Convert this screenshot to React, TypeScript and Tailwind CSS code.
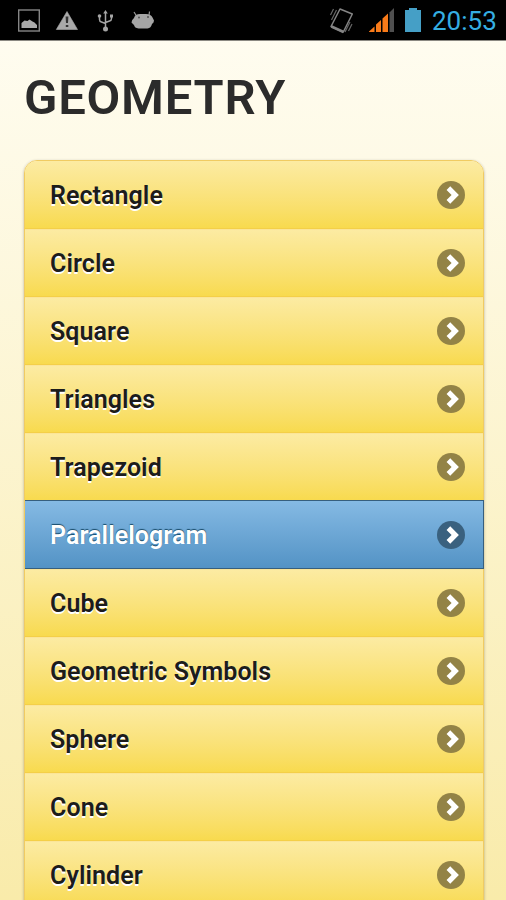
const items = [
  "Rectangle",
  "Circle",
  "Square",
  "Triangles",
  "Trapezoid",
  "Parallelogram",
  "Cube",
  "Geometric Symbols",
  "Sphere",
  "Cone",
  "Cylinder",
];

function StatusBar() {
  return (
    <div className="flex h-[41px] shrink-0 items-start justify-between border-b border-[#8b8982] bg-black">
      <svg width="170" height="40" viewBox="0 0 170 40">
        <rect x="18.7" y="10" width="20.6" height="21" fill="none" stroke="#858585" strokeWidth="1.4" />
        <path d="M21.500 28v-5l3-2.500 3 .5 2-1.500 3 2 2 1 2.500 2.500v3z" fill="#aaa" />
        <path d="M67 11.500L77.500 29.500H56.300z" fill="#a9a9a9" stroke="#a9a9a9" strokeWidth="0.6" strokeLinejoin="round" />
        <path d="M65.600 16.500h2.800l-.4 6.500h-2zM65.800 25h2.500v2h-2.500z" fill="#333" />
        <g fill="none" stroke="#a5a5a5" strokeWidth="1.500">
          <path d="M105.500 13v15M99.500 17v2.500q0 2 2 2.500l4 1.500M111.500 17v1.500q0 2-2 2.500l-4 1.500" />
        </g>
        <path d="M105.500 10l2.300 3.500h-4.600z" fill="#a5a5a5" />
        <circle cx="105.500" cy="29" r="2.500" fill="#a5a5a5" />
        <circle cx="99.500" cy="16" r="1.800" fill="#a5a5a5" />
        <rect x="110" y="14.500" width="3" height="3" fill="#a5a5a5" />
        <path d="M134 12l2.500 4M149.500 11.500l-.5 4" stroke="#999" strokeWidth="1.200" />
        <path d="M134 18q1-4 6-4h6q5 0 6.500 3.500l1.500 3q0 2-2 3.500-1 4-4.500 4.500h-9q-4-.5-4.500-3.500l-2.500-2.500q0-2.500 2.500-4.500z" fill="#a5a5a5" />
        <circle cx="139" cy="17.500" r="1" fill="#555" />
        <circle cx="148" cy="17" r="1" fill="#555" />
      </svg>
      <div className="flex items-start">
        <svg width="112" height="40" viewBox="320 0 112 40">
          <path d="M340 9l12.300 5-9 18-12.300-5.500z" fill="none" stroke="#858585" strokeWidth="1.500" strokeLinejoin="round" />
          <path d="M331.500 26.500l12 5.500" stroke="#858585" strokeWidth="2.600" />
          <path d="M330.500 15l3-6M331.500 20l5-10M345 32l5-10M348.500 31l3.500-7" stroke="#666" strokeWidth="1.200" />
          <path d="M369 32v-.5l5.500-5V32zM376 32v-7.500l5-4.500v12zM382.500 32V18.500l5.500-5V32z" fill="#f97b19" />
          <path d="M389.500 32V12.500l4.500-4.500v24z" fill="#505050" />
          <path d="M405 10h4V8h8v2h4v22h-16z" fill="#459fc6" />
        </svg>
        <span className="mt-px mr-[9px] w-[65px] whitespace-nowrap pt-px text-[26px] leading-[39px] text-[#35aee2]">20:53</span>
      </div>
    </div>
  );
}

function Row({ label, selected }: { label: string; selected: boolean }) {
  return (
    <li
      className={
        "flex items-center justify-between border-t pl-[25px] " +
        (selected
          ? "-mt-px -mr-px h-[69px] border-r border-b border-[#365f7e] bg-linear-to-b from-[#85bae4] to-[#5393c5] pr-[18px] text-white [text-shadow:0_-1px_1px_#174a69]"
          : "h-[68px] border-[#fbe598] bg-linear-to-b from-[#fceba2] to-[#f8da4c] pr-[18px] pb-px text-[#1c1c1c] shadow-[inset_0_-1px_0_#f4cf48] [text-shadow:0_1.500px_0_#fff]")
      }
    >
      <span className="pt-0.5 text-[25px] leading-8 font-semibold tracking-[0.07px]">{label}</span>
      <svg width="28" height="28" viewBox="0 0 28 28">
        <circle cx="14" cy="14" r="14" fill={selected ? "#3a617f" : "#938346"} />
        <path d="M11.400 7.200L18.200 14l-6.800 6.800" fill="none" stroke="#fff" strokeWidth="5.200" />
      </svg>
    </li>
  );
}

export default function App() {
  return (
    <div className="flex h-[900px] w-[506px] flex-col overflow-hidden bg-linear-to-b from-[#fffdf3] to-[#f9ebaa] font-['Roboto',sans-serif]">
      <StatusBar />
      <h1 className="mt-[25px] ml-6 h-[64px] text-[49px] leading-[64px] font-semibold tracking-[0.75px] text-[#2b2b2b]">GEOMETRY</h1>
      <ul className="mt-[30px] mr-[22px] ml-6 h-[760px] shrink-0 rounded-t-[13px] border border-[#f0cb62] shadow-[0_1px_3px_rgba(0,0,0,0.3)] [&>li:first-child]:rounded-t-[12px] [&>li:first-child]:border-t-0 [&>li:first-child]:pb-0">
        {items.map((label) => (
          <Row key={label} label={label} selected={label === "Parallelogram"} />
        ))}
      </ul>
    </div>
  );
}
